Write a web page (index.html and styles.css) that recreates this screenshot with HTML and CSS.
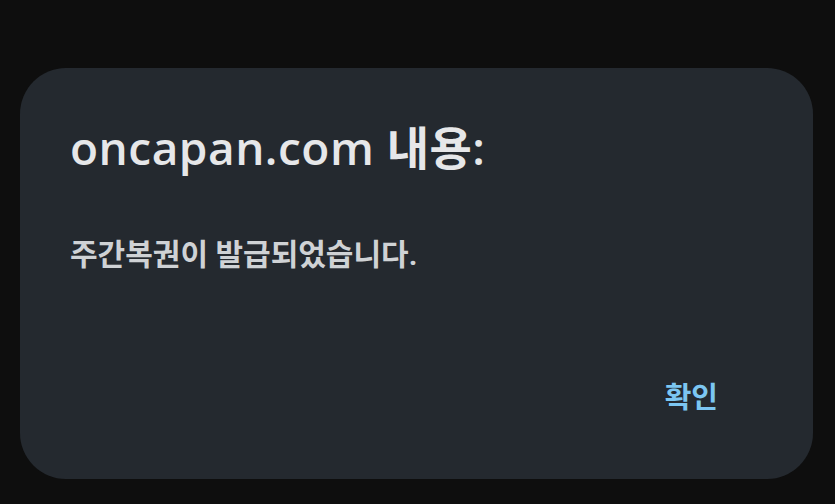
FILE: index.html
```html
<!DOCTYPE html>
<html lang="ko">
<head>
<meta charset="utf-8">
<link rel="stylesheet" href="styles.css">
</head>
<body>
<div class="dialog">
  <h1 class="title">oncapan.com 내용:</h1>
  <p class="message">주간복권이 발급되었습니다.</p>
  <div class="actions"><span class="ok">확인</span></div>
</div>
</body>
</html>
```
FILE: styles.css
```css
html, body { margin: 0; padding: 0; }
body {
  background: #0e0e0e;
  width: 835px;
  height: 504px;
  overflow: hidden;
  font-family: Roboto, "Noto Sans CJK KR", sans-serif;
}
.dialog {
  margin: 68px 0 0 20px;
  width: 793px;
  height: 411px;
  box-sizing: border-box;
  background: #24292f;
  border-radius: 46px;
  padding: 0 95px 0 50px;
  display: flex;
  flex-direction: column;
}
.title {
  margin: 56px 0 0 0;
  font-family: "Open Sans", "Noto Sans CJK KR", sans-serif;
  font-size: 46px;
  font-weight: 600;
  letter-spacing: 0.5px;
  color: #e6e7e9;
  line-height: 1;
}
.message {
  margin: 70px 0 0 0;
  font-size: 30px;
  font-weight: 700;
  color: #cfd2d5;
  line-height: 1;
}
.actions {
  margin-top: 114px;
  display: flex;
  justify-content: flex-end;
}
.ok {
  font-size: 29px;
  font-weight: 700;
  color: #7cc6f2;
  line-height: 1;
}
```
